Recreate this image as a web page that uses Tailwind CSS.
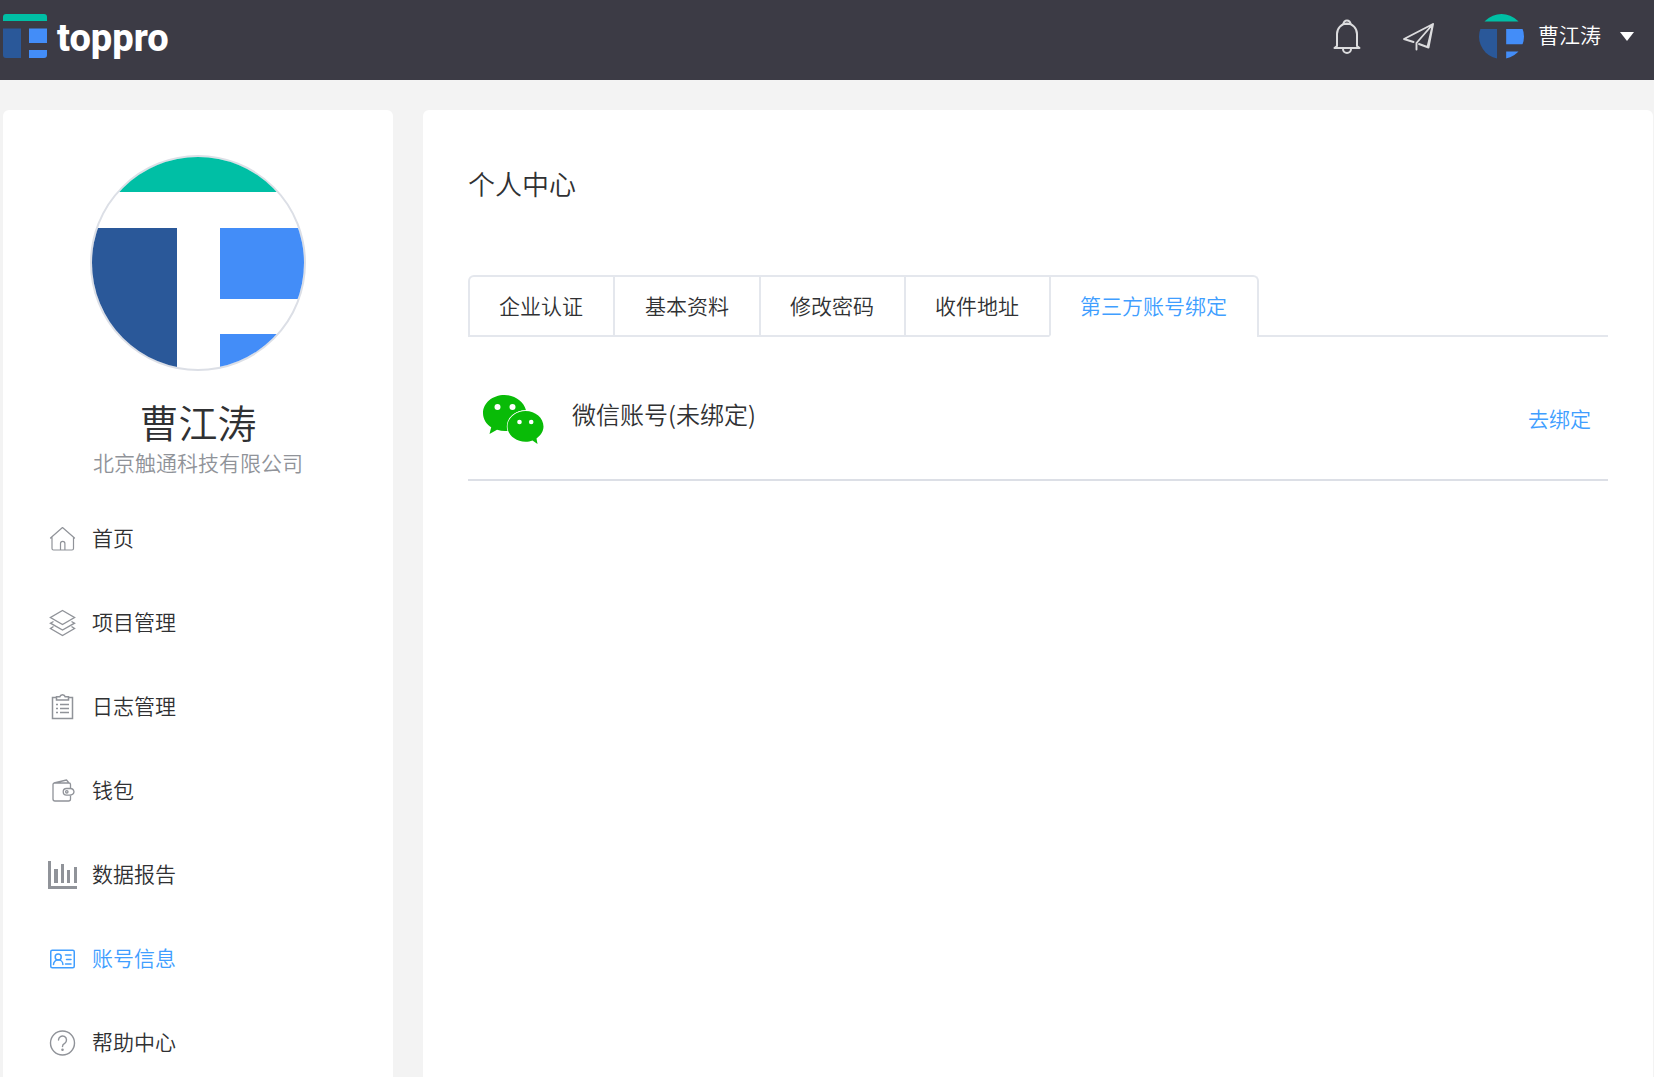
<!DOCTYPE html>
<html lang="zh-CN">
<head>
<meta charset="utf-8">
<meta name="viewport" content="width=device-width, initial-scale=1">
<title>个人中心 - toppro</title>
<script src="https://cdn.jsdelivr.net/npm/@tailwindcss/browser@4"></script>
</head>
<body class="flex min-h-screen flex-col bg-[#f3f3f3] font-['Noto_Sans_CJK_SC',sans-serif] text-[21px] font-[350] text-[#303133]">

<header class="flex h-20 shrink-0 items-start justify-between bg-[#3c3b45] pr-5 pl-[3px]">
  <a href="#" class="flex items-start gap-[10px] pt-[14px]" aria-label="toppro">
    <svg class="size-11" viewBox="0 0 44 44">
      <path d="M0 7V3a3 3 0 0 1 3-3H41a3 3 0 0 1 3 3V7Z" fill="#00bfa5"/>
      <path d="M0 14.500H18V44H3a3 3 0 0 1-3-3Z" fill="#2a5899"/>
      <path d="M26 14.500H44V29H26ZM26 36H44V41a3 3 0 0 1-3 3H26Z" fill="#438df8"/>
    </svg>
    <span class="font-[Roboto,sans-serif] text-[38px] leading-[48px] font-extrabold text-white">toppro</span>
  </a>
  <div class="flex items-center pt-[14px]">
    <button type="button" aria-label="通知" class="mr-[42px]">
      <svg class="h-9 w-7" viewBox="0 0 28 36" fill="none" stroke="#dcdcde" stroke-width="2" stroke-linejoin="round" stroke-linecap="round">
        <path d="M4 27V15a10 10.500 0 0 1 20 0V27L26.500 29H1.500Z"/>
        <path d="M10.500 5a3.500 3.500 0 0 1 7 0ZM10 30a4 4 0 0 0 8 0"/>
      </svg>
    </button>
    <button type="button" aria-label="消息" class="mr-[44px]">
      <svg class="h-7 w-8" viewBox="0 0 32 28" fill="none" stroke="#dcdcde" stroke-width="1.900" stroke-linejoin="round" stroke-linecap="round">
        <path d="M10.500 19L1 16L30 1L25.500 24.500L16 21M30 1L13.500 20V26.500M30 1L24.500 24"/>
      </svg>
    </button>
    <button type="button" class="flex items-center text-white">
      <svg class="size-[45px] rounded-full" viewBox="0 0 212 212">
        <path d="M0 0H212V35H0Z" fill="#00bfa5"/>
        <path d="M0 71H85V212H0Z" fill="#2a5899"/>
        <path d="M128 71H212V142H128ZM128 177H212V212H128Z" fill="#438df8"/>
      </svg>
      <span class="ml-[14px] pb-[5px] leading-10">曹江涛</span>
      <svg class="ml-[19px] h-[9px] w-[14px]" viewBox="0 0 14 9"><path d="M0 0H14L7 9Z" fill="#fff"/></svg>
    </button>
  </div>
</header>

<div class="flex flex-1 gap-[30px] pt-[30px] pr-px pl-[3px]">
  <aside class="flex w-[390px] shrink-0 flex-col rounded-t-md bg-white pt-[45px]">
    <div class="flex flex-col items-center">
      <svg class="size-[216px] rounded-full border-2 border-[#dcdfe6]" viewBox="0 0 212 212">
        <path d="M0 0H212V35H0Z" fill="#00bfa5"/>
        <path d="M0 71H85V212H0Z" fill="#2a5899"/>
        <path d="M128 71H212V142H128ZM128 177H212V212H128Z" fill="#438df8"/>
      </svg>
      <h2 class="mt-6 text-[39px] leading-[52px]">曹江涛</h2>
      <p class="leading-[30px] text-[#909399]">北京触通科技有限公司</p>
    </div>
    <nav class="mt-[34px] flex flex-col gap-7 px-[45px]">
      <a href="#" class="flex h-14 items-center gap-[14px]">
        <svg class="size-[30px]" viewBox="0 0 30 30" fill="none" stroke="#909399" stroke-width="1.200" stroke-linejoin="round" stroke-linecap="round"><path d="M2.500 14L14.500 3.500L26.500 14M4 13V24.500a1.500 1.500 0 0 0 1.500 1.500H24a1.500 1.500 0 0 0 1.500-1.500V13M12.500 26V19.500a2.200 2.200 0 0 1 4.400 0V26"/></svg>
        <span class="pb-[2px]">首页</span>
      </a>
      <a href="#" class="flex h-14 items-center gap-[14px]">
        <svg class="size-[30px]" viewBox="0 0 30 30" fill="none" stroke="#909399" stroke-width="1.400"><path d="M14.500 2.500L26.500 9.500L14.500 16.500L2.500 9.500ZM5.500 13.500L2.500 15.200L14.500 22L26.500 15.200L23.500 13.500M5.500 18.500L2.500 20.500L14.500 27.500L26.500 20.500L23.500 18.500"/></svg>
        <span class="pb-[2px]">项目管理</span>
      </a>
      <a href="#" class="flex h-14 items-center gap-[14px]">
        <svg class="size-[30px]" viewBox="0 0 30 30" fill="none" stroke="#909399" stroke-width="1.500"><path d="M8.500 5.500H4.500V26.500H24.500V5.500H20.500M8.500 4.800H11.800a2.800 2.800 0 0 1 5.400 0H20.500V8H8.500Z"/><path d="M8 12.500H10M12 12.500H21M8 16.500H10M12 16.500H21M8 20.500H10M12 20.500H21"/></svg>
        <span class="pb-[2px]">日志管理</span>
      </a>
      <a href="#" class="flex h-14 items-center gap-[14px]">
        <svg class="size-[30px]" viewBox="0 0 30 30" fill="none" stroke="#909399" stroke-width="1.300" stroke-linejoin="round"><path d="M22.500 12V8.500a1.500 1.500 0 0 0-1.500-1.500H6.500a1.500 1.500 0 0 0-1.500 1.500V23a2 2 0 0 0 2 2H20.500a2 2 0 0 0 2-2V19.500M6 7L18.500 4L21 7"/><path d="M22.500 12.500H18.500a3.300 3.300 0 0 0 0 6.600H21.500Q25.500 19 26 15.800Q25.500 12.500 22.500 12.500Z"/><circle cx="18.800" cy="15.800" r="1.200"/></svg>
        <span class="pb-[2px]">钱包</span>
      </a>
      <a href="#" class="flex h-14 items-center gap-[14px]">
        <svg class="size-[30px]" viewBox="0 0 30 30" fill="#909399"><path d="M0 1H3V26H29V29H0ZM6 9H10V23H6ZM13 4H16V23H13ZM19 10H22V23H19ZM26 7H29V23H26Z"/></svg>
        <span class="pb-[2px]">数据报告</span>
      </a>
      <a href="#" aria-current="page" class="flex h-14 items-center gap-[14px] text-[#409eff]">
        <svg class="size-[30px]" viewBox="0 0 30 30" fill="none" stroke="#409eff" stroke-width="1.500" stroke-linecap="round"><rect x="2.750" y="6.250" width="23.500" height="17.500" rx="1.500"/><circle cx="10.200" cy="13" r="3"/><path d="M5.500 20.500a4.700 4.700 0 0 1 9.400 0M17.500 11H23M18.500 15.500H23M17.500 20H23"/></svg>
        <span class="pb-[2px]">账号信息</span>
      </a>
      <a href="#" class="flex h-14 items-center gap-[14px]">
        <svg class="size-[30px]" viewBox="0 0 30 30" fill="none" stroke="#909399" stroke-width="1.400" stroke-linecap="round"><circle cx="14.500" cy="15" r="12"/><path d="M10.500 12a4 4 0 1 1 6.200 3.300Q14.500 16.400 14.500 18.500"/><circle cx="14.500" cy="21.800" r=".6" fill="#909399"/></svg>
        <span class="pb-[2px]">帮助中心</span>
      </a>
    </nav>
  </aside>

  <main class="min-w-0 flex-1 rounded-t-md bg-white px-[45px] pt-[54px]">
    <h1 class="text-[27px] leading-10">个人中心</h1>
    <div class="mt-[71px] flex" role="tablist">
      <div class="flex h-[62px] shrink-0 rounded-t-md border-t-2 border-r-2 border-l-2 border-[#e4e7ed]">
        <button type="button" role="tab" class="border-b-2 border-[#e4e7ed] pr-[30px] pl-[29px]">企业认证</button>
        <button type="button" role="tab" class="border-b-2 border-l-2 border-[#e4e7ed] px-[30px]">基本资料</button>
        <button type="button" role="tab" class="border-b-2 border-l-2 border-[#e4e7ed] pr-[30px] pl-[29px]">修改密码</button>
        <button type="button" role="tab" class="border-b-2 border-l-2 border-[#e4e7ed] pr-[30px] pl-[29px]">收件地址</button>
        <button type="button" role="tab" aria-selected="true" class="border-b-2 border-l-2 border-b-transparent border-l-[#e4e7ed] pr-[30px] pl-[29px] text-[#409eff]">第三方账号绑定</button>
      </div>
      <div class="flex-1 border-b-2 border-[#e4e7ed]"></div>
    </div>
    <section class="flex h-36 items-center border-b-2 border-[#dcdfe6] px-[15px]" role="tabpanel">
      <svg class="mt-6 h-[50px] w-[61px]" viewBox="0 0 61 50">
        <path d="M21.500 0C9.500 0 0 8 0 18C0 24 3.200 29 8.200 32.300L6.500 39L14 34.800C18 36 22 36.400 25.500 35.800C22 25 30 15.500 43 15.200C40.500 6 31.500 0 21.500 0Z" fill="#09bb07"/>
        <path d="M42.500 16C32.500 16 24.500 23 24.500 31.500S32.500 46.800 42.500 46.800C45 46.800 47.500 46.500 49.500 45.500L54.500 49L53.500 43.500C57.500 40.500 60.500 36.500 60.500 31.500C60.500 23 52.500 16 42.500 16Z" fill="#09bb07" stroke="#fff" stroke-width="1.400" paint-order="stroke"/>
        <g fill="#fff"><circle cx="14.500" cy="12" r="3"/><circle cx="29.500" cy="12" r="3"/><circle cx="36.500" cy="27" r="2.300"/><circle cx="48.200" cy="27" r="2.300"/></g>
      </svg>
      <h3 class="mt-3 ml-7 text-[24px] leading-9">微信账号(未绑定)</h3>
      <a href="#" class="mt-5 ml-auto pr-[2px] leading-8 text-[#409eff]">去绑定</a>
    </section>
  </main>
</div>
</body>
</html>
